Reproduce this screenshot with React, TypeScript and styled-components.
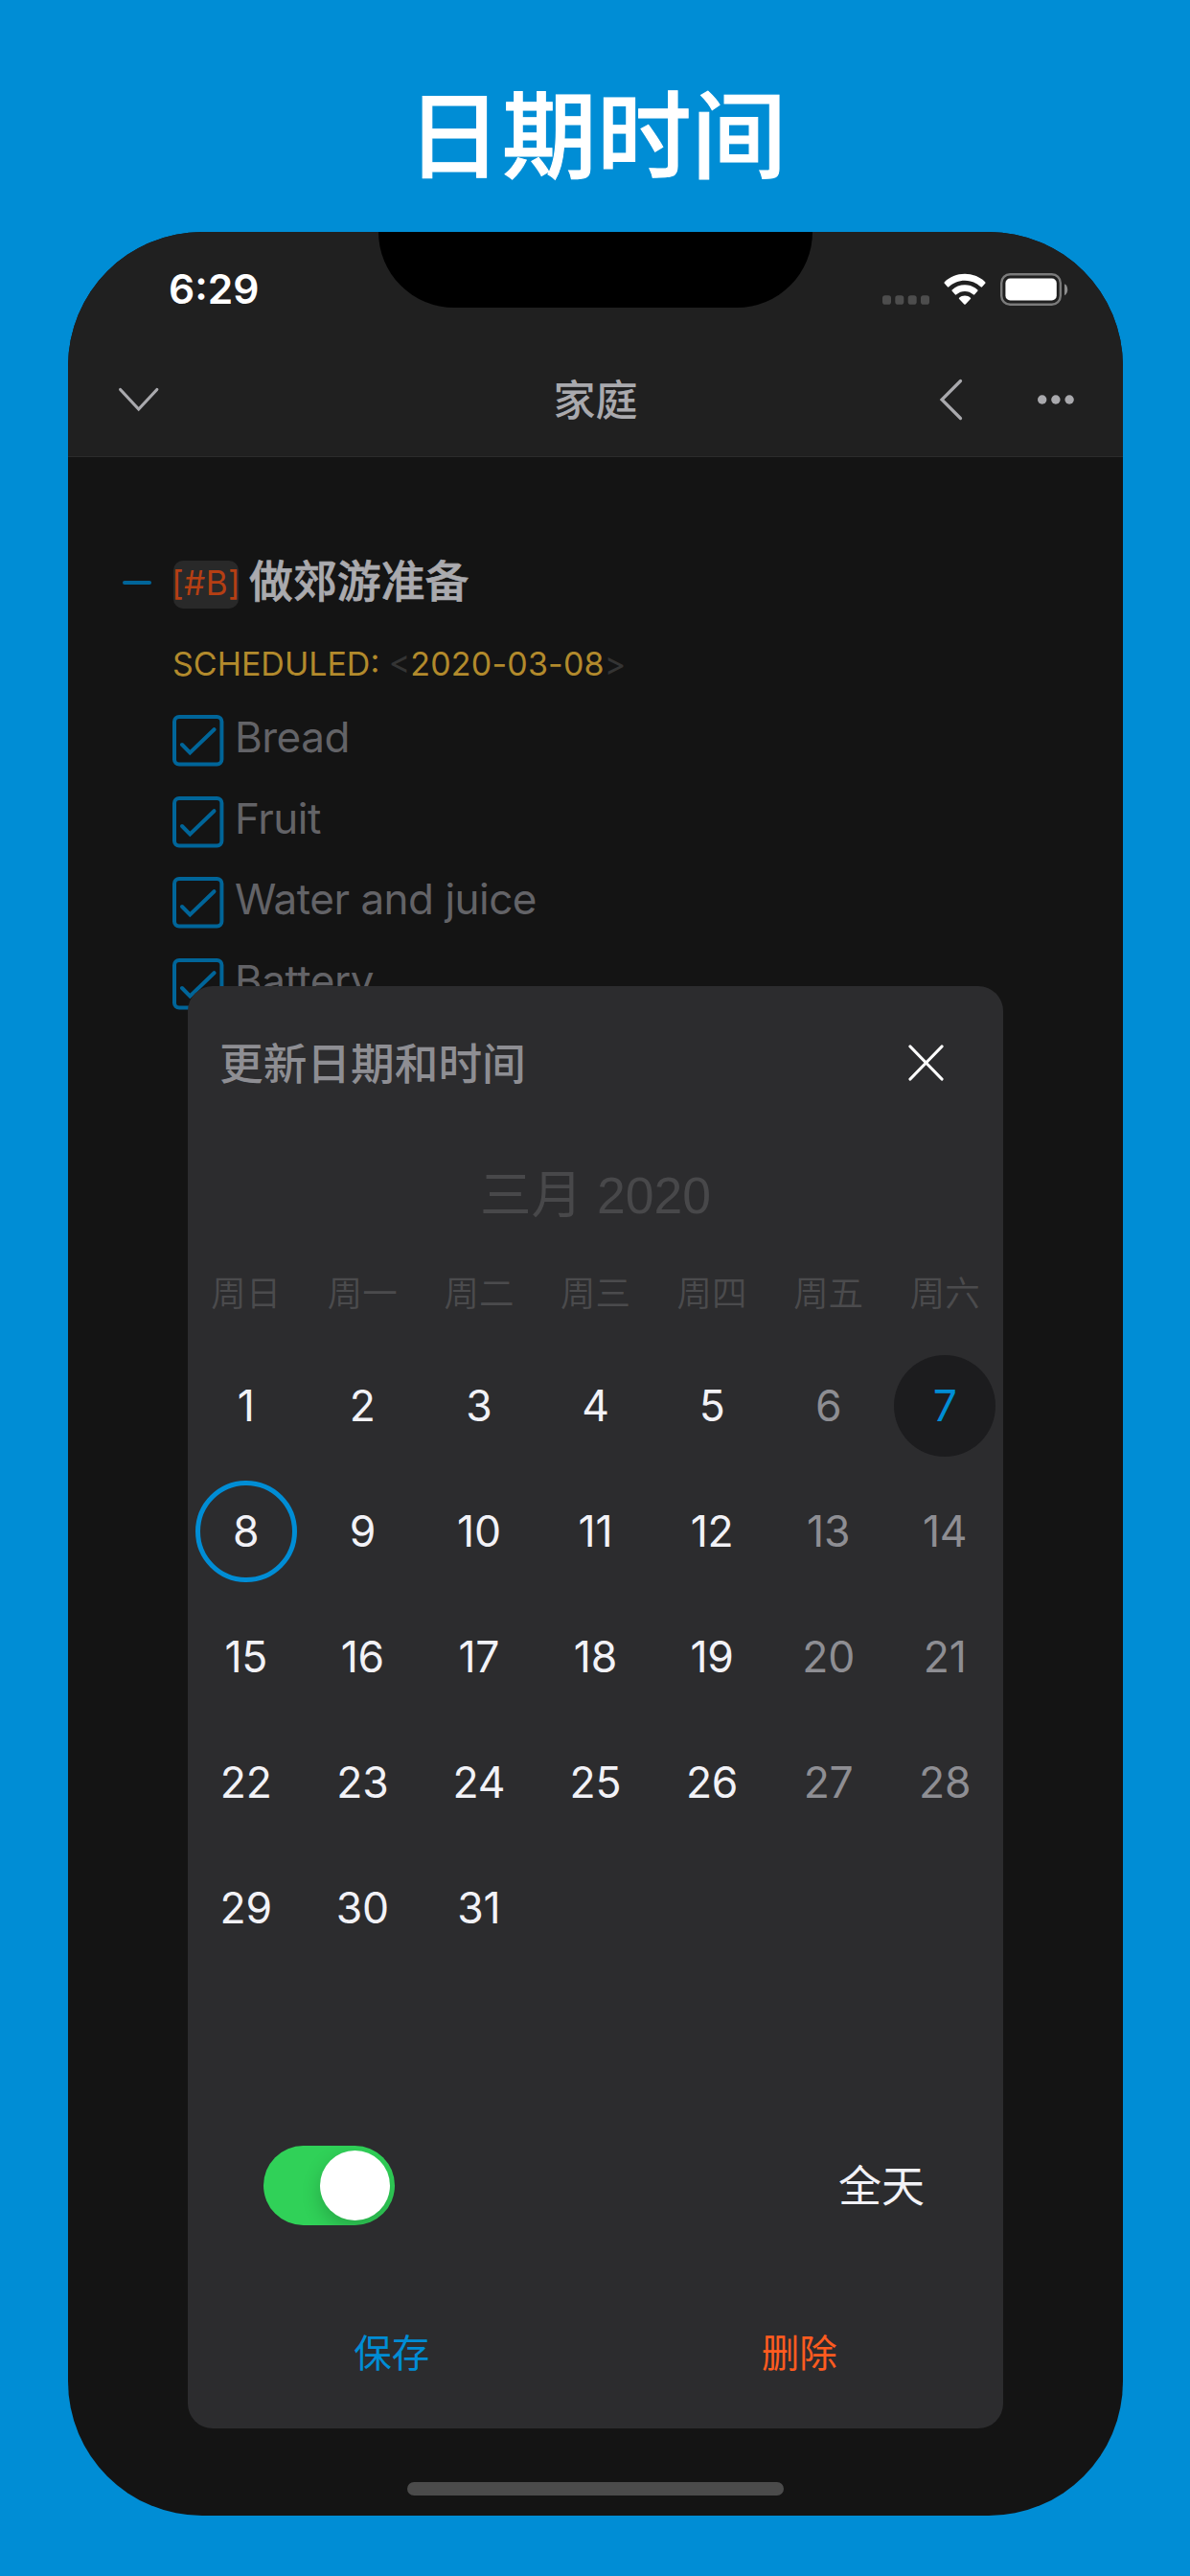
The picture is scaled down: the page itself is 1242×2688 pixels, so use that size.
import React from "react";
import styled, { createGlobalStyle } from "styled-components";

const latin = `Inter, "Noto Sans CJK SC", sans-serif`;
const cjk = `"Noto Sans CJK SC", Inter, sans-serif`;

const GlobalStyle = createGlobalStyle`
  * { box-sizing: border-box; }
  body { margin: 0; background: #008dd5; }
  button { border: 0; padding: 0; background: none; font: inherit; color: inherit; }
  svg { display: block; }
`;

const Page = styled.div`
  width: 1242px;
  height: 2688px;
  overflow: hidden;
  display: flex;
  flex-direction: column;
  padding-left: 71px;
  background: #008dd5;
  font-family: ${latin};
`;

const Headline = styled.h1`
  margin: 0;
  width: 1101px;
  height: 242px;
  padding: 61px 0 0 3px;
  text-align: center;
  font: 500 98.5px/148px ${cjk};
  letter-spacing: 0.6px;
  -webkit-text-stroke: 1px #fff;
  color: #fff;
`;

const Phone = styled.main`
  position: relative;
  width: 1101px;
  height: 2383px;
  border-radius: 140px;
  overflow: hidden;
  background: #141414;
`;

const Notch = styled.div`
  position: absolute;
  top: 0;
  left: 324px;
  width: 453px;
  height: 79px;
  border-radius: 0 0 79px 79px;
  background: #000;
`;

const TopBar = styled.header`
  background: #202020;
  border-bottom: 1px solid #2b2b2b;
  color: #a9a9ad;
`;

const StatusBar = styled.div`
  display: flex;
  align-items: center;
  justify-content: space-between;
  height: 119px;
  padding: 0 57px 0 105px;
`;

const Time = styled.span`
  font: 600 42.5px/50px ${latin};
  color: #fff;
`;

const StatusIcons = styled.div`
  display: flex;
  align-items: center;
  gap: 15px;
`;

const NavBar = styled.nav`
  display: grid;
  grid-template-columns: 1fr auto 1fr;
  align-items: center;
  height: 115px;
  padding: 0 51px 4px 51px;
`;

const NavTitle = styled.h2`
  margin: 0;
  padding-bottom: 3px;
  font: 500 44px/60px ${cjk};
`;

const NavActions = styled.div`
  display: flex;
  align-items: center;
  justify-content: flex-end;
  gap: 78px;
`;

const Outline = styled.section`
  padding: 101px 57px 0;
`;

const HeadingRow = styled.div`
  display: flex;
  align-items: center;
  height: 60px;
`;

const Dash = styled.span`
  width: 30px;
  height: 4px;
  margin-right: 23px;
  border-radius: 2px;
  background: #006599;
`;

const Priority = styled.span`
  display: flex;
  align-items: flex-start;
  justify-content: center;
  width: 68px;
  height: 50px;
  margin: 4px 11px 0 0;
  border-radius: 10px;
  background: #292929;
  font: 400 35px/46px ${latin};
  letter-spacing: 0.4px;
  color: #b53f13;
`;

const Heading = styled.h3`
  margin: 0;
  padding-bottom: 11px;
  font: 500 45.9px/60px ${cjk};
  -webkit-text-stroke: 0.7px #aaaaae;
  color: #aaaaae;
`;

const Schedule = styled.div`
  margin: 34px 0 0 52px;
  height: 42px;
  font: 400 34px/42px ${latin};
  color: #b28a2c;
  white-space: pre;
`;

const ScheduleDate = styled.span`
  letter-spacing: 0.2px;
`;

const Bracket = styled.span`
  color: #343434;
`;

const Checklist = styled.ul`
  list-style: none;
  margin: 32px 0 0 52px;
  padding: 0;
  display: flex;
  flex-direction: column;
  gap: 30.7px;
`;

const CheckItem = styled.li`
  display: flex;
  align-items: flex-start;
  gap: 11px;
  height: 54px;
  font: 400 44px/47px ${latin};
  letter-spacing: -0.5px;
  color: #636367;
`;

const Dialog = styled.section`
  position: absolute;
  top: 787px;
  left: 125px;
  width: 851px;
  height: 1505px;
  display: flex;
  flex-direction: column;
  border-radius: 26px;
  background: #2c2c2e;
`;

const DialogHeader = styled.div`
  display: flex;
  align-items: center;
  justify-content: space-between;
  height: 160px;
  padding: 0 62px 0 33px;
`;

const DialogTitle = styled.h4`
  margin: 0;
  padding-bottom: 4px;
  font: 500 45.7px/60px ${cjk};
  color: #8e8e93;
`;

const Month = styled.div`
  height: 118px;
  padding-top: 24px;
  text-align: center;
  font: 400 53.5px/70px "Liberation Sans", "Noto Sans CJK SC", sans-serif;
  color: #48484a;
`;

const Weekdays = styled.div`
  display: grid;
  grid-template-columns: repeat(7, 1fr);
  place-items: center;
  height: 94px;
  padding-bottom: 12px;
`;

const Weekday = styled.span`
  font: 350 36.5px/50px ${cjk};
  color: #4b4b4d;
`;

const Week = styled.div`
  display: grid;
  grid-template-columns: repeat(7, 1fr);
  place-items: center;
  height: 131px;
`;

type DayKind = "normal" | "weekend" | "today" | "selected";

const dayColor: Record<DayKind, string> = {
  normal: "#f2f2f7",
  weekend: "#8e8e93",
  today: "#008dd5",
  selected: "#f2f2f7",
};

const Day = styled.button<{ $kind: DayKind }>`
  display: flex;
  align-items: center;
  justify-content: center;
  width: 106px;
  height: 106px;
  border-radius: 50%;
  border: ${(p) => (p.$kind === "selected" ? "5px solid #008dd5" : "0")};
  background: ${(p) => (p.$kind === "today" ? "#1c1c1e" : "transparent")};
  font: 400 44.5px/54px ${latin};
  letter-spacing: -0.2px;
  color: ${(p) => dayColor[p.$kind]};
`;

const AllDay = styled.div`
  display: flex;
  align-items: center;
  justify-content: space-between;
  margin-top: 183px;
  height: 83px;
  padding: 0 82px 0 79px;
`;

const AllDayLabel = styled.span`
  padding-bottom: 4px;
  font: 400 45px/60px ${cjk};
  color: #f2f2f7;
`;

const Toggle = styled.button`
  display: flex;
  align-items: center;
  justify-content: flex-end;
  width: 137px;
  height: 83px;
  padding-right: 5px;
  border-radius: 42px;
  overflow: hidden;
  background: #30d158;
`;

const Knob = styled.span`
  width: 73px;
  height: 73px;
  border-radius: 50%;
  background: #fff;
  box-shadow: 0 8px 20px rgba(0, 0, 0, 0.2);
`;

const Actions = styled.div`
  display: grid;
  grid-template-columns: 1fr 1fr;
  margin-top: 96px;
`;

const Action = styled.button<{ $danger?: boolean }>`
  height: 70px;
  font: 400 39.5px/70px ${cjk};
  color: ${(p) => (p.$danger ? "#ff5b1f" : "#008dd5")};
`;

const HomeIndicator = styled.div`
  position: absolute;
  left: 353.5px;
  bottom: 21px;
  width: 393.5px;
  height: 14px;
  border-radius: 7px;
  background: #4b4b4b;
`;

const Signal = () => (
  <svg width="49" height="34" viewBox="0 0 49 34" fill="#4d4d4d">
    {[0, 13.3, 26.7, 40].map((x) => (
      <rect key={x} x={x} y="23.3" width="9" height="9.4" rx="2.8" />
    ))}
  </svg>
);

const Wifi = () => (
  <svg width="44" height="34" viewBox="0 0 44 34" fill="#fff">
    <path d="M22 .7C30.300 .7 37.800 3.900 43.200 9.200Q43.900 10 43.200 10.800L40.100 14.300Q39.400 15 38.600 14.300C34.200 10.100 28.400 7.700 22 7.700S9.800 10.100 5.400 14.300Q4.600 15 3.900 14.300L.8 10.800Q.1 10 .8 9.200C6.200 3.900 13.700 .7 22 .7Z" />
    <path d="M22 12.300C27.100 12.300 31.800 14.200 35.300 17.400Q36 18.100 35.300 18.800L32.200 22.300Q31.500 23 30.700 22.300C28.300 20.200 25.300 19 22 19S15.700 20.200 13.300 22.300Q12.500 23 11.800 22.300L8.700 18.800Q8 18.100 8.700 17.400C12.200 14.200 16.900 12.300 22 12.300Z" />
    <path d="M22 23.600C24.300 23.600 26.300 24.400 27.900 25.700Q28.600 26.300 27.900 27.100L22.700 32.500Q22 33.200 21.300 32.500L16.100 27.100Q15.400 26.300 16.100 25.700C17.700 24.400 19.700 23.600 22 23.600Z" />
  </svg>
);

const Battery = () => (
  <svg width="71" height="34" viewBox="0 0 71 34">
    <rect x="1.2" y="1.2" width="61.600" height="31.600" rx="9" fill="none" stroke="#7b7b7b" strokeWidth="2.400" />
    <rect x="5.400" y="5.500" width="53.400" height="23" rx="5" fill="#fff" />
    <path d="M67 11.300C71.300 13 71.300 21.500 67 23.200Z" fill="#8c8c8c" />
  </svg>
);

const ChevronDown = () => (
  <svg width="45" height="28" viewBox="0 0 45 28" fill="none" stroke="currentColor" strokeWidth="3.200" strokeLinecap="round">
    <path d="M3.600 3.500L22.700 24L41.800 3.500" />
  </svg>
);

const ChevronLeft = () => (
  <svg width="26" height="44" viewBox="0 0 26 44" fill="none" stroke="currentColor" strokeWidth="3.200" strokeLinecap="round">
    <path d="M23.500 2.500L4 22L23.500 41.500" />
  </svg>
);

const More = () => (
  <svg width="38" height="10" viewBox="0 0 38 10" fill="currentColor">
    <circle cx="4.700" cy="5" r="4.700" />
    <circle cx="18.900" cy="5" r="4.700" />
    <circle cx="33.100" cy="5" r="4.700" />
  </svg>
);

const Close = () => (
  <svg width="37" height="38" viewBox="0 0 37 38" fill="none" stroke="#fff" strokeWidth="3.200" strokeLinecap="round">
    <path d="M2 2L35 36M35 2L2 36" />
  </svg>
);

const CheckedBox = () => (
  <svg width="54" height="54" viewBox="0 0 54 54" fill="none" stroke="#006599" strokeWidth="4" strokeLinecap="round">
    <rect x="2" y="2" width="49.400" height="49.600" rx="5" />
    <path d="M10 31L18.300 39.500L43.500 15.200" />
  </svg>
);

const items = ["Bread", "Fruit", "Water and juice", "Battery"];
const weekdays = ["周日", "周一", "周二", "周三", "周四", "周五", "周六"];
const weeks = [0, 1, 2, 3, 4].map((w) =>
  [1, 2, 3, 4, 5, 6, 7].map((d) => w * 7 + d).filter((d) => d <= 31)
);

const kindOf = (day: number, column: number): DayKind => {
  if (day === 7) return "today";
  if (day === 8) return "selected";
  return column >= 5 ? "weekend" : "normal";
};

export default function App() {
  return (
    <Page>
      <GlobalStyle />
      <Headline>日期时间</Headline>
      <Phone>
        <TopBar>
          <StatusBar>
            <Time>6:29</Time>
            <StatusIcons>
              <Signal />
              <Wifi />
              <Battery />
            </StatusIcons>
          </StatusBar>
          <NavBar>
            <ChevronDown />
            <NavTitle>家庭</NavTitle>
            <NavActions>
              <ChevronLeft />
              <More />
            </NavActions>
          </NavBar>
        </TopBar>
        <Notch />
        <Outline>
          <HeadingRow>
            <Dash />
            <Priority>[#B]</Priority>
            <Heading>做郊游准备</Heading>
          </HeadingRow>
          <Schedule>
            <span>SCHEDULED: </span>
            <Bracket>&lt;</Bracket>
            <ScheduleDate>2020-03-08</ScheduleDate>
            <Bracket>&gt;</Bracket>
          </Schedule>
          <Checklist>
            {items.map((item) => (
              <CheckItem key={item}>
                <CheckedBox />
                <span>{item}</span>
              </CheckItem>
            ))}
          </Checklist>
        </Outline>
        <Dialog>
          <DialogHeader>
            <DialogTitle>更新日期和时间</DialogTitle>
            <Close />
          </DialogHeader>
          <Month>三月 2020</Month>
          <Weekdays>
            {weekdays.map((name) => (
              <Weekday key={name}>{name}</Weekday>
            ))}
          </Weekdays>
          {weeks.map((week) => (
            <Week key={week[0]}>
              {week.map((day, column) => (
                <Day key={day} $kind={kindOf(day, column)}>
                  {day}
                </Day>
              ))}
            </Week>
          ))}
          <AllDay>
            <Toggle>
              <Knob />
            </Toggle>
            <AllDayLabel>全天</AllDayLabel>
          </AllDay>
          <Actions>
            <Action>保存</Action>
            <Action $danger>删除</Action>
          </Actions>
        </Dialog>
        <HomeIndicator />
      </Phone>
    </Page>
  );
}
